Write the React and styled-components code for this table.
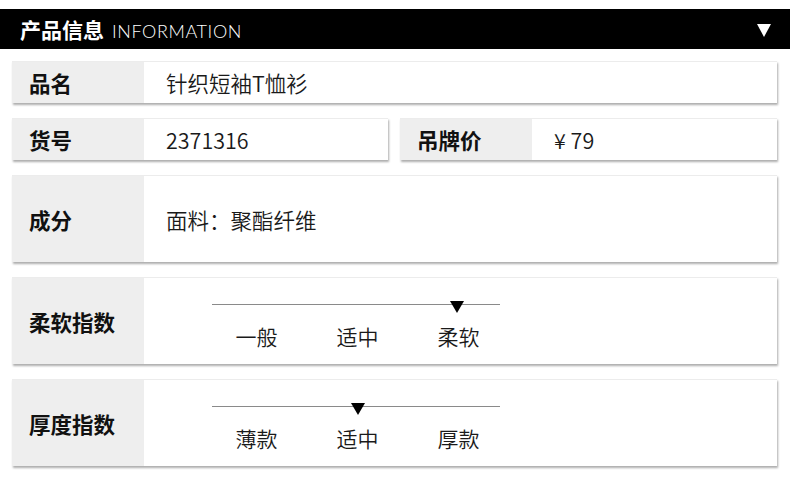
import styled, { createGlobalStyle } from "styled-components";

const GlobalStyle = createGlobalStyle`
  html, body {
    margin: 0;
    padding: 0;
    background: #fff;
  }
  body {
    font-family: "Noto Sans CJK SC", "Noto Sans", sans-serif;
    color: #1a1a1a;
  }
`;

const sliders = [
  {label: '柔软指数', options: ['一般', '适中', '柔软'], active: 2},
  {label: '厚度指数', options: ['薄款', '适中', '厚款'], active: 1},
];

function Slider({options, active}) {
  return (
    <SliderBox>
      <Track/>
      <Marker style={{left: active * 99 + 53}}/>
      <Options>
        {options.map((opt) => <Option key={opt}>{opt}</Option>)}
      </Options>
    </SliderBox>
  );
}

export default function App() {
  return (
    <Page>
      <GlobalStyle/>
      <Header>
        <HeaderTitle>
          <strong>产品信息</strong>
          <span>INFORMATION</span>
        </HeaderTitle>
        <HeaderArrow/>
      </Header>

      <List>
        <Card>
          <Label>品名</Label>
          <Value>针织短袖T恤衫</Value>
        </Card>

        <Pair>
          <Card>
            <Label>货号</Label>
            <Value>2371316</Value>
          </Card>
          <Card>
            <Label>吊牌价</Label>
            <Value>¥ 79</Value>
          </Card>
        </Pair>

        <Card $tall>
          <Label>成分</Label>
          <Value>面料：聚酯纤维</Value>
        </Card>

        {sliders.map((s) => (
          <Card $tall key={s.label}>
            <Label>{s.label}</Label>
            <Slider options={s.options} active={s.active}/>
          </Card>
        ))}
      </List>
    </Page>
  );
}

const Page = styled.div`
  width: 790px;
  padding: 9px 0 11px;
`;

const Header = styled.div`
  height: 40px;
  background: #000;
  display: flex;
  align-items: center;
  justify-content: space-between;
  padding: 0 19px 0 20px;
  box-sizing: border-box;
`;

const HeaderTitle = styled.div`
  display: flex;
  align-items: baseline;
  gap: 8px;
  color: #fff;
  strong {
    font-size: 21px;
    font-weight: 700;
  }
  span {
    font-family: "Lato", "Noto Sans", sans-serif;
    font-size: 18px;
    font-weight: 300;
    letter-spacing: 0.6px;
  }
`;

const HeaderArrow = styled.div`
  width: 0;
  height: 0;
  border-left: 7px solid transparent;
  border-right: 7px solid transparent;
  border-top: 13px solid #fff;
  margin-top: 2px;
`;

const List = styled.div`
  display: flex;
  flex-direction: column;
  gap: 15px;
  padding: 12px 13px 0 12px;
`;

const Pair = styled.div`
  display: grid;
  grid-template-columns: 376px 377px;
  gap: 12px;
`;

const Card = styled.div`
  display: flex;
  height: ${(p) => (p.$tall ? '87px' : '42px')};
  background: #fff;
  border-top: 1px solid #ececec;
  box-sizing: border-box;
  box-shadow: 1px 2px 2px rgba(0, 0, 0, 0.32);
`;

const Label = styled.div`
  width: 132px;
  flex-shrink: 0;
  background: #eeeeee;
  display: flex;
  align-items: center;
  padding-left: 17px;
  box-sizing: border-box;
  font-size: 21.5px;
  font-weight: 700;
  color: #111;
`;

const Value = styled.div`
  display: flex;
  align-items: center;
  padding-left: 22px;
  font-size: 21.5px;
  font-weight: 350;
  color: #1a1a1a;
`;

const SliderBox = styled.div`
  position: relative;
  margin-left: 62px;
  width: 303px;
  padding-top: 26px;
`;

const Track = styled.div`
  margin-left: 6px;
  width: 288px;
  height: 1px;
  background: #8a8a8a;
`;

const Marker = styled.div`
  position: absolute;
  top: 23px;
  width: 0;
  height: 0;
  transform: translateX(-7px);
  border-left: 7px solid transparent;
  border-right: 7px solid transparent;
  border-top: 12px solid #000;
`;

const Options = styled.div`
  display: grid;
  grid-template-columns: repeat(3, 101px);
  margin-top: 17px;
`;

const Option = styled.div`
  text-align: center;
  font-size: 21px;
  font-weight: 350;
  line-height: 28px;
  color: #1a1a1a;
`;
